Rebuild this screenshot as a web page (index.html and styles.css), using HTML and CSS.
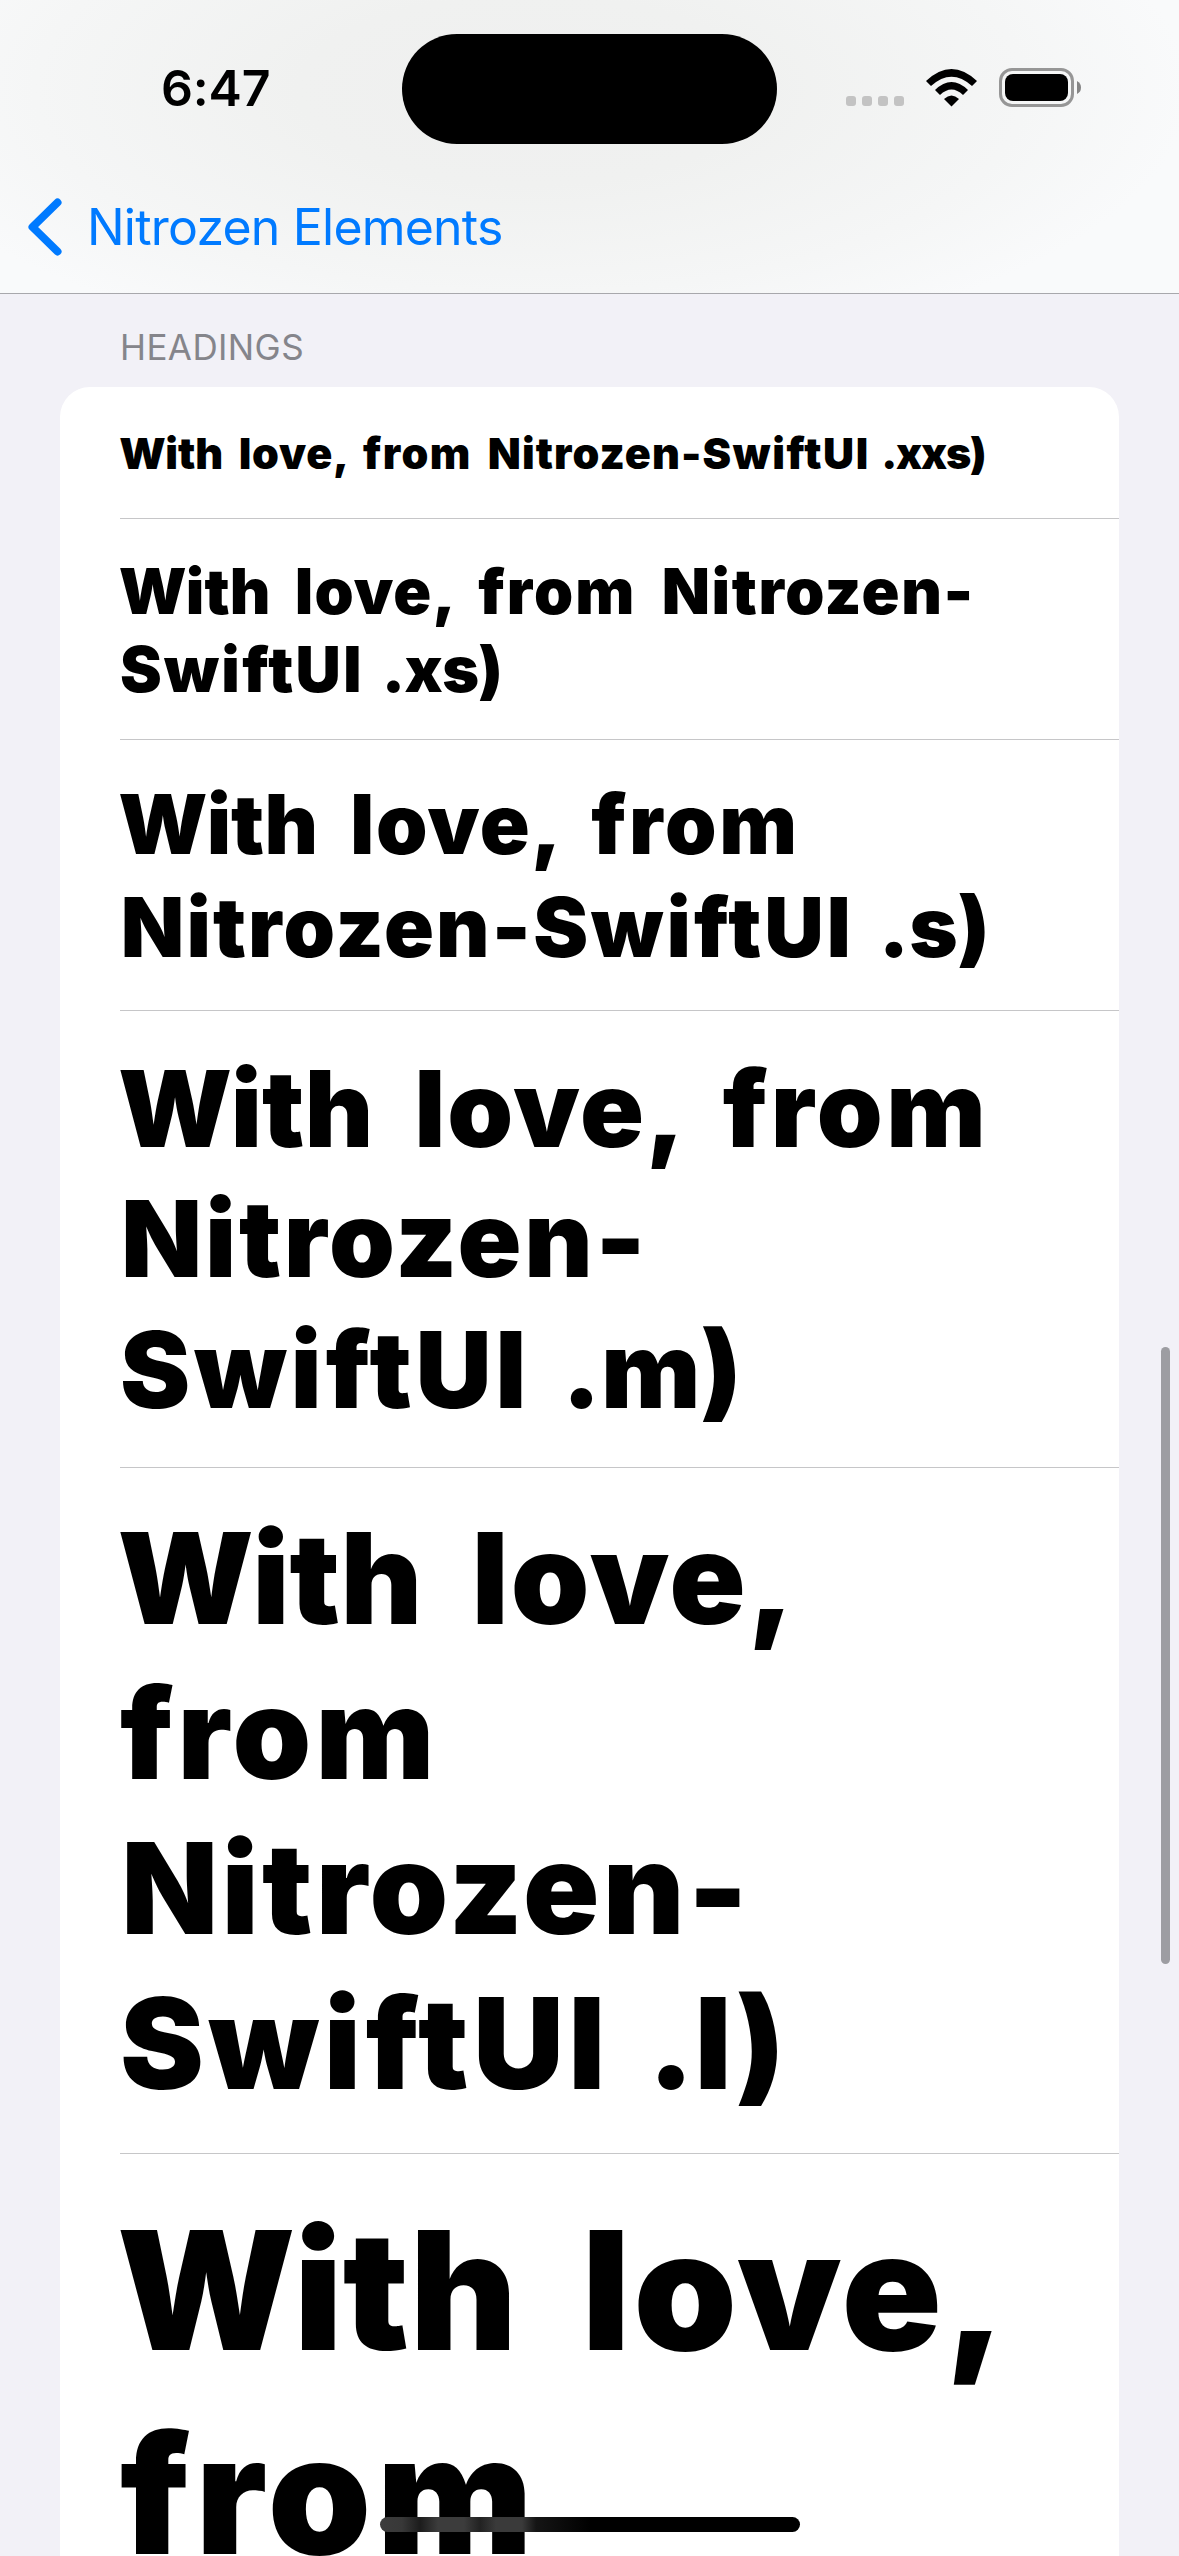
FILE: index.html
```html
<!DOCTYPE html>
<html lang="en">
<head>
<meta charset="utf-8">
<title>Headings</title>
<link rel="stylesheet" href="styles.css">
</head>
<body>
<div class="screen">
  <header class="topbar">
    <div class="status">
      <time class="clock">6:47</time>
      <div class="island"></div>
      <div class="indicators">
        <div class="signal"><i></i><i></i><i></i><i></i></div>
        <svg class="wifi" width="51" height="38" viewBox="0 0 51 38">
          <path d="M0 12Q25.500 -12 51 12L46 17Q25.500 -1.500 5 17Z"/>
          <path d="M9 21Q25.500 5 42 21L37 26Q25.500 15 14 26Z"/>
          <path d="M18 30Q25.500 23 33 30L25.500 37.500Z"/>
        </svg>
        <svg class="battery" width="83" height="39" viewBox="0 0 83 39">
          <rect x="1.500" y="1.500" width="72" height="36" rx="11.500" fill="none" stroke="#969696" stroke-width="3"/>
          <rect x="6" y="6" width="63" height="27" rx="8"/>
          <path d="M78 13Q82 15 82 19.500T78 26Z" fill="#858585"/>
        </svg>
      </div>
    </div>
    <nav class="nav">
      <svg class="chevron" width="34" height="58" viewBox="0 0 34 58">
        <path d="M29.500 4.500L4.500 29L29.500 53.500" fill="none" stroke="#007aff" stroke-width="8" stroke-linecap="round" stroke-linejoin="round"/>
      </svg>
      <a class="back">Nitrozen Elements</a>
    </nav>
  </header>
  <main class="content">
    <h2 class="section-title">HEADINGS</h2>
    <section class="card">
      <div class="row xxs"><p><span class="with"><b>W</b>ith</span> <span class="love">love,</span> <span class="from">from</span> <span class="nitro">Nitrozen-</span><span class="swift">SwiftUI</span><span class="suffix"> .xxs)</span></p></div>
      <div class="row xs"><p><span class="with"><b>W</b>ith</span> <span class="love">love,</span> <span class="from">from</span> <span class="nitro">Nitrozen-</span><br><span class="swift">SwiftUI</span><span class="suffix"> .xs)</span></p></div>
      <div class="row s"><p><span class="with"><b>W</b>ith</span> <span class="love">love,</span> <span class="from">from</span><br><span class="nitro">Nitrozen-</span><span class="swift">SwiftUI</span><span class="suffix"> .s)</span></p></div>
      <div class="row m"><p><span class="with"><b>W</b>ith</span> <span class="love">love,</span> <span class="from">from</span><br><span class="nitro">Nitrozen-</span><br><span class="swift">SwiftUI</span><span class="suffix"> .m)</span></p></div>
      <div class="row l"><p><span class="with"><b>W</b>ith</span> <span class="love">love,</span><br><span class="from">from</span><br><span class="nitro">Nitrozen-</span><br><span class="swift">SwiftUI</span><span class="suffix"> .l)</span></p></div>
      <div class="row xl"><p><span class="with"><b>W</b>ith</span> <span class="love">love,</span><br><span class="from">from</span></p></div>
    </section>
  </main>
  <div class="scrollbar"></div>
  <div class="home"></div>
</div>
</body>
</html>
```
FILE: styles.css
```css
* { box-sizing: border-box; margin: 0; padding: 0; }
body { width: 1179px; height: 2556px; overflow: hidden; background: #f2f1f7; }
.screen {
  position: relative;
  height: 2556px;
  overflow: hidden;
  font-family: Inter, "Liberation Sans", sans-serif;
  color: #000;
}
.topbar {
  height: 294px;
  border-bottom: 1px solid #a8a8ac;
  background: radial-gradient(ellipse 660px 270px at 530px 90px, #efefef 0%, #f0f1f0 35%, #f5f6f6 75%, #f9fafb 100%);
}
.status {
  display: grid;
  grid-template-columns: 402px 375px 402px;
  height: 178px;
  padding-top: 34px;
}
.clock {
  padding: 21px 0 0 161px;
  font-size: 50px;
  line-height: 66px;
  font-weight: 600;
  letter-spacing: -0.2px;
}
.island { height: 110px; border-radius: 55px; background: #000; }
.indicators { display: flex; align-items: flex-start; padding: 34px 0 0 69px; }
.signal { display: flex; gap: 6px; padding-top: 28px; margin-right: 22px; }
.signal i { width: 10px; height: 10px; border-radius: 3px; background: #c3c3c3; }
.wifi { margin: 1px 22px 0 0; }
.nav { display: flex; align-items: center; height: 97px; padding-left: 28px; }
.back { margin-left: 25px; color: #007aff; font-size: 50px; line-height: 60px; letter-spacing: -0.8px; }
.section-title {
  height: 93px;
  padding: 32px 0 0 120px;
  color: #85858b;
  font-size: 35px;
  line-height: 42px;
  font-weight: 400;
  letter-spacing: 0.4px;
}
.card { margin: 0 60px; padding-left: 60px; background: #fff; border-radius: 30px 30px 0 0; }
.row { display: flex; align-items: center; border-bottom: 1px solid #c6c6c8; font-weight: 900; font-variant-ligatures: none; }
.row p { padding-top: 1px; white-space: nowrap; word-spacing: 0.19em; }
.row b { font-weight: 900; letter-spacing: -0.012em; }
.with { margin-left: -0.02em; }
.love { letter-spacing: 0.017em; }
.from { letter-spacing: 0.034em; }
.love + .from { margin-left: -0.05em; }
.nitro { margin-left: 0.01em; letter-spacing: 0.026em; }
.swift { letter-spacing: 0.037em; }
.suffix { word-spacing: 0.1em; }
.xxs .suffix { letter-spacing: -0.03em; }
.xs .suffix { letter-spacing: -0.01em; }
.xxs { height: 132px; font-size: 43px; line-height: 52px; }
.xxs p { padding-top: 0; word-spacing: 0.16em; }
.xs { height: 221px; font-size: 62.7px; line-height: 78px; }
.s { height: 271px; font-size: 82.5px; line-height: 103px; }
.m { height: 457px; font-size: 105.5px; line-height: 130.5px; }
.l { height: 686px; font-size: 126px; line-height: 154.8px; }
.xl { height: 480px; font-size: 165.5px; line-height: 203.6px; align-items: flex-start; padding-top: 34px; }
.scrollbar { position: absolute; left: 1161px; top: 1347px; width: 9px; height: 617px; border-radius: 5px; background: #9d9da2; }
.home {
  position: absolute;
  left: 380px;
  top: 2517px;
  width: 420px;
  height: 15px;
  border-radius: 8px;
  background: linear-gradient(90deg, #3c3c3c 0, #383838 22px, #1c1c1c 40px, #3c3c3c 58px, #3c3c3c 84px, #222 100px, #3a3a3a 116px, #3a3a3a 142px, #151515 156px, #000 210px);
}
```
